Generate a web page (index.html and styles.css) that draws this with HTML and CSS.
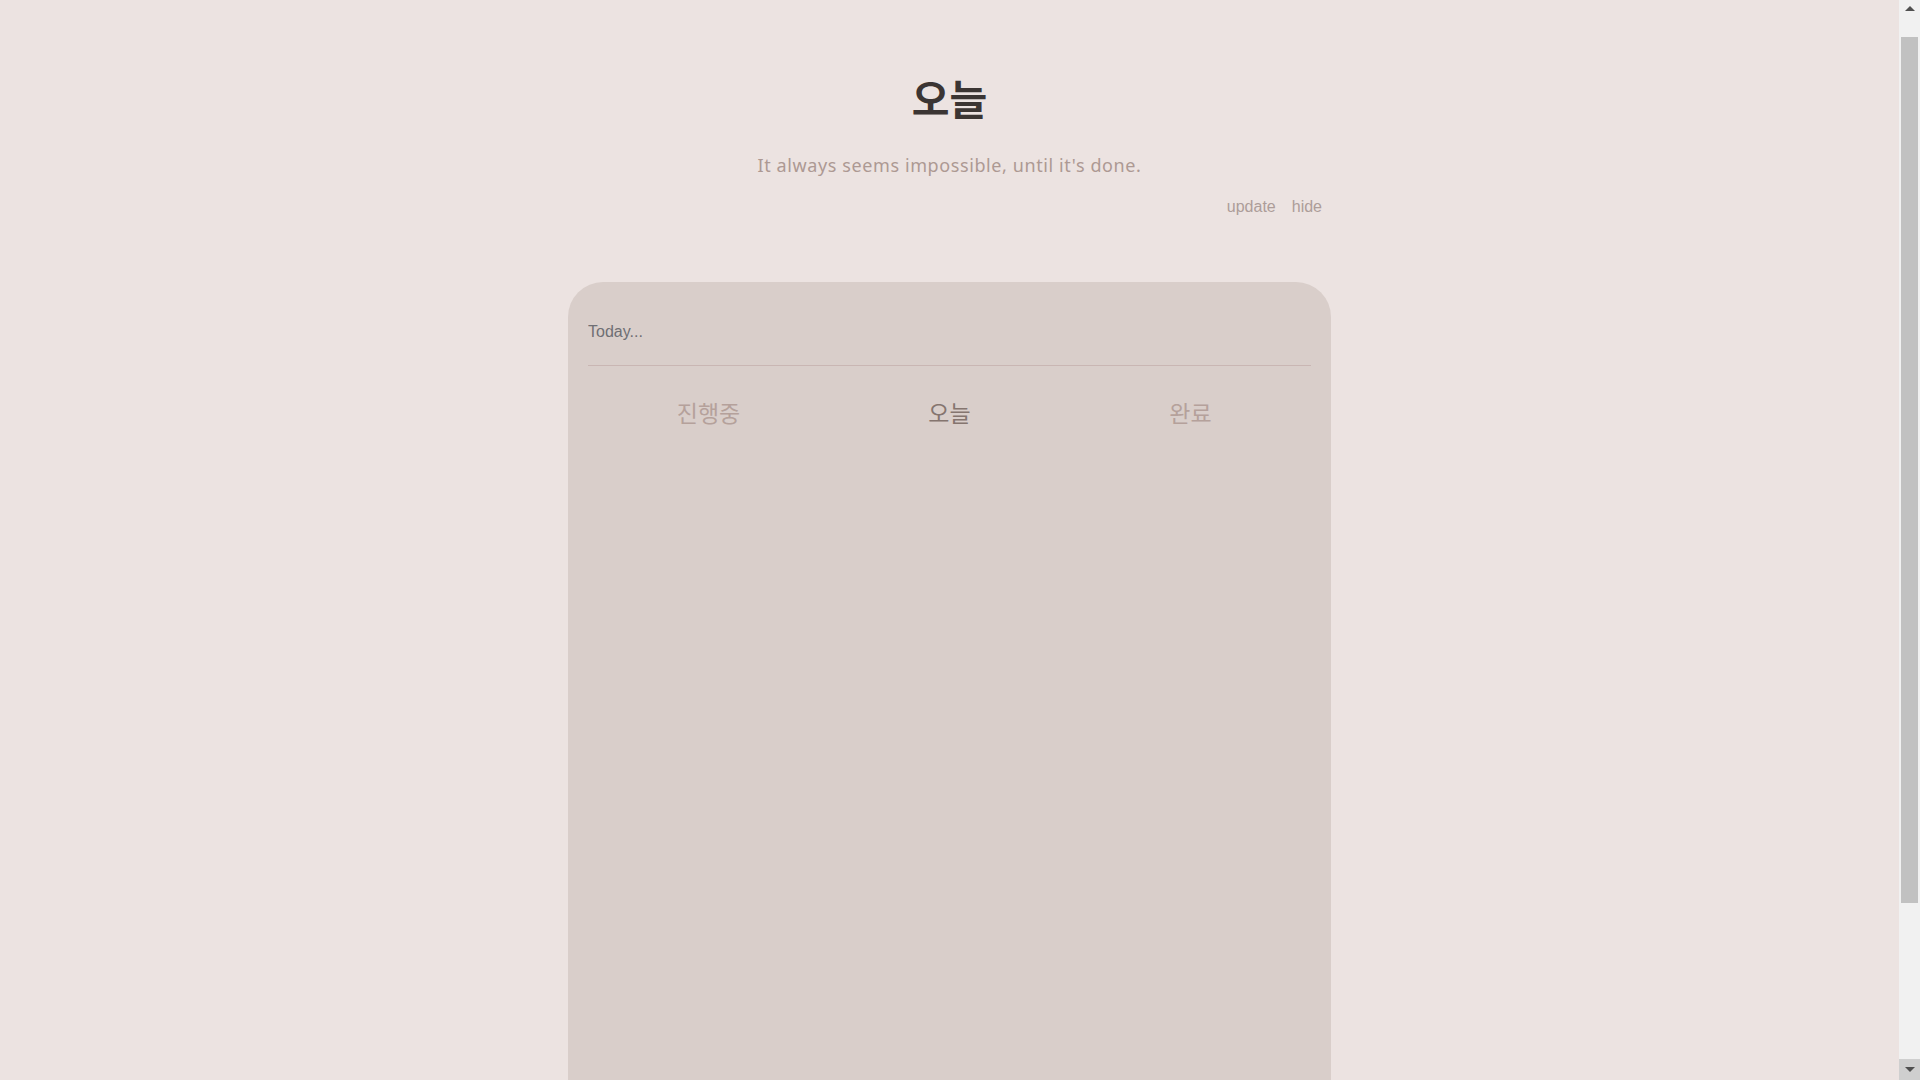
FILE: index.html
```html
<!DOCTYPE html>
<html lang="ko">
<head>
  <meta charset="utf-8">
  <title>오늘</title>
  <link rel="stylesheet" href="styles.css">
</head>
<body>
  <div class="page">
    <div class="wrap">
      <header class="head">
        <h1 class="title">오늘</h1>
        <p class="quote">It always seems impossible, until it's done.</p>
        <div class="quote-tools">
          <a href="#">update</a>
          <a href="#">hide</a>
        </div>
      </header>

      <main class="board">
        <input class="todo-input" type="text" placeholder="Today...">
        <nav class="tabs">
          <button class="tab">진행중</button>
          <button class="tab active">오늘</button>
          <button class="tab">완료</button>
        </nav>
        <ul class="todo-list"></ul>
      </main>
    </div>
  </div>

  <!-- window scrollbar, as in the capture -->
  <div class="scrollbar">
    <span class="sb-btn sb-up"></span>
    <span class="sb-thumb"></span>
    <span class="sb-btn sb-down"></span>
  </div>
</body>
</html>
```

FILE: styles.css
```css
  html, body {
    margin: 0;
    background-color: #ece3e1;
  }

  .page {
    margin-right: 21px;
  }

  .wrap {
    width: 763px;
    margin: 0 auto;
  }

  .head {
    padding-top: 69px;
    text-align: center;
  }

  .title {
    margin: 0;
    font-family: "Noto Sans CJK KR", sans-serif;
    font-size: 41px;
    font-weight: 700;
    line-height: 56px;
    color: #3b3533;
  }

  .quote {
    margin: 26px 0 0;
    font-family: "Noto Sans", sans-serif;
    font-size: 18px;
    line-height: 28px;
    letter-spacing: 0.6px;
    color: #ad9993;
  }

  .quote-tools {
    display: flex;
    justify-content: flex-end;
    gap: 16px;
    padding-right: 9px;
    margin-top: 18px;
    line-height: 20px;
  }

  .quote-tools a {
    font-family: "Liberation Sans", Arial, sans-serif;
    font-size: 16px;
    color: #ad9d99;
    text-decoration: none;
  }

  .board {
    margin-top: 65px;
    min-height: 972px;
    padding: 20px;
    background-color: #d9ceca;
    border-radius: 35px 35px 0 0;
  }

  .todo-input {
    display: block;
    width: 100%;
    box-sizing: border-box;
    padding: 21px 0 24px;
    border: none;
    border-bottom: 1px solid #c9b6b3;
    background: transparent;
    outline: none;
    font-family: "Liberation Sans", Arial, sans-serif;
    font-size: 16px;
    color: #555;
  }

  .todo-input::placeholder {
    color: #6f6f74;
  }

  .tabs {
    display: grid;
    grid-template-columns: repeat(3, 1fr);
    margin-top: 29px;
  }

  .tab {
    padding: 0;
    border: none;
    background: none;
    font-family: "Noto Sans CJK KR", sans-serif;
    font-size: 23px;
    line-height: 34px;
    color: #b5a19b;
    cursor: pointer;
  }

  .tab.active {
    color: #85756f;
  }

  .todo-list {
    margin: 0;
    padding: 0;
    list-style: none;
  }

  .scrollbar {
    position: fixed;
    top: 0;
    right: 0;
    width: 21px;
    height: 100vh;
    display: flex;
    flex-direction: column;
    background-color: #f1f1f1;
  }

  .sb-btn {
    height: 21px;
    display: flex;
    justify-content: center;
    align-items: center;
    flex-shrink: 0;
  }

  .sb-btn::after {
    content: "";
    border-left: 5px solid transparent;
    border-right: 5px solid transparent;
  }

  .sb-up {
    height: 16px;
    padding-bottom: 5px;
  }

  .sb-up::after {
    border-bottom: 5px solid #505050;
  }

  .sb-down {
    background-color: #cfcfcf;
  }

  .sb-down::after {
    border-top: 5px solid #505050;
  }

  .sb-thumb {
    height: 866px;
    margin: 16px 2px 0 2px;
    background-color: #c1c1c1;
  }

  .sb-thumb + .sb-btn {
    margin-top: auto;
  }
```
